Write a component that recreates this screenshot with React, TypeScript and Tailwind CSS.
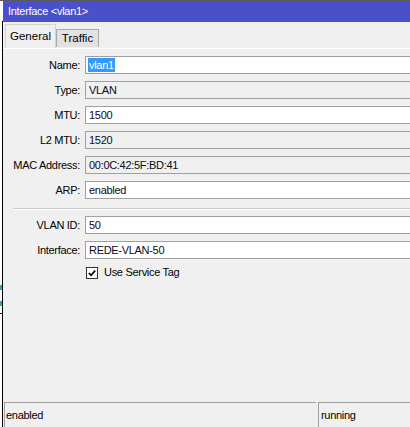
import React from "react";

type Field = {
  label: string;
  value: string;
  editable?: boolean;
  selected?: boolean;
};

const topFields: Field[] = [
  { label: "Name:", value: "vlan1", editable: true, selected: true },
  { label: "Type:", value: "VLAN" },
  { label: "MTU:", value: "1500", editable: true },
  { label: "L2 MTU:", value: "1520" },
  { label: "MAC Address:", value: "00:0C:42:5F:BD:41" },
  { label: "ARP:", value: "enabled", editable: true },
];

const vlanFields: Field[] = [
  { label: "VLAN ID:", value: "50", editable: true },
  { label: "Interface:", value: "REDE-VLAN-50", editable: true },
];

function FieldRow({ field }: { field: Field }) {
  return (
    <div className="flex h-[18px] items-center">
      <div className="w-[77px] shrink-0 text-right text-black">{field.label}</div>
      <div
        className={`ml-[5px] flex h-[18px] flex-1 items-center border-y border-l border-[#a0a0a0] pl-[2px] ${
          field.editable ? "bg-white" : "bg-[#f0f0f0]"
        }`}
      >
        {field.selected ? (
          <span className="bg-[#3399ff] px-[1px] leading-[14px] text-white">{field.value}</span>
        ) : (
          <span className="px-[1px] text-[#0a0a1a]">{field.value}</span>
        )}
      </div>
    </div>
  );
}

export default function App() {
  return (
    <div
      className="flex h-[427px] w-[410px] flex-col overflow-hidden bg-[#f0f0f0] text-[11px] leading-none tracking-[-0.3px]"
      style={{ fontFamily: '"Liberation Sans", Arial, sans-serif' }}
    >
      <div className="h-px shrink-0 bg-[#5a5a5a]" />
      <div className="flex min-h-0 flex-1">
        {/* strip of the window behind */}
        <div className="flex w-[3px] shrink-0 flex-col bg-white">
          <div className="h-[20px]" />
          <div className="relative flex-1 border-r border-black">
            <div className="absolute left-0 top-[292px] h-px w-[3px] bg-black" />
            <div className="absolute left-0 top-[264px] h-[5px] w-[2px] bg-[#2aa6b8]" />
            <div className="absolute left-0 top-[280px] h-[5px] w-[2px] bg-[#2aa6b8]" />
          </div>
        </div>

        <div className="flex min-w-0 flex-1 flex-col">
          {/* title bar */}
          <div className="flex h-[21px] shrink-0 items-center bg-[#4a50c9] pl-[5px] text-white">
            Interface &lt;vlan1&gt;
          </div>

          {/* tabs */}
          <div className="flex h-[26px] shrink-0 items-end bg-[#efefef] pl-[2px] tracking-normal">
            <div className="flex h-[24px] w-[51px] items-center justify-center border-x border-t border-[#d4d4d4] bg-[#f0f0f0] text-[11.5px] text-black">
              General
            </div>
            <div className="mb-px flex h-[18px] w-[43px] items-center justify-center border-x border-t border-[#a8a8a8] bg-[#e2e2e2] text-[11.5px] text-black">
              Traffic
            </div>
          </div>
          <div className="h-px shrink-0 bg-white" />

          {/* form */}
          <div className="flex shrink-0 flex-col gap-[7px] pt-[7px]">
            {topFields.map((f) => (
              <FieldRow key={f.label} field={f} />
            ))}
          </div>

          <div className="ml-[10px] mt-[9px] h-px shrink-0 bg-[#c8c8c8]" />
          <div className="ml-[10px] h-px shrink-0 bg-white" />

          <div className="flex shrink-0 flex-col gap-[7px] pt-[6px]">
            {vlanFields.map((f) => (
              <FieldRow key={f.label} field={f} />
            ))}
            <div className="flex h-[13px] items-center pl-[83px]">
              <div className="flex h-[12px] w-[12px] items-center justify-center border border-[#333333] bg-white">
                <svg width="8" height="8" viewBox="0 0 8 8">
                  <path d="M0.8 4 L3 6.2 L7.2 1.6" fill="none" stroke="#000" strokeWidth="1.7" />
                </svg>
              </div>
              <span className="ml-[6px] text-black">Use Service Tag</span>
            </div>
          </div>

          <div className="flex-1" />

          {/* status bar */}
          <div className="flex h-[25px] shrink-0 pl-[1px]">
            <div className="flex w-[312px] items-center border-l border-t border-[#a0a0a0] pl-[1px] text-black">
              enabled
            </div>
            <div className="ml-[2px] flex flex-1 items-center border-l border-t border-[#a0a0a0] pl-[2px] text-black">
              running
            </div>
          </div>
        </div>
      </div>
    </div>
  );
}
